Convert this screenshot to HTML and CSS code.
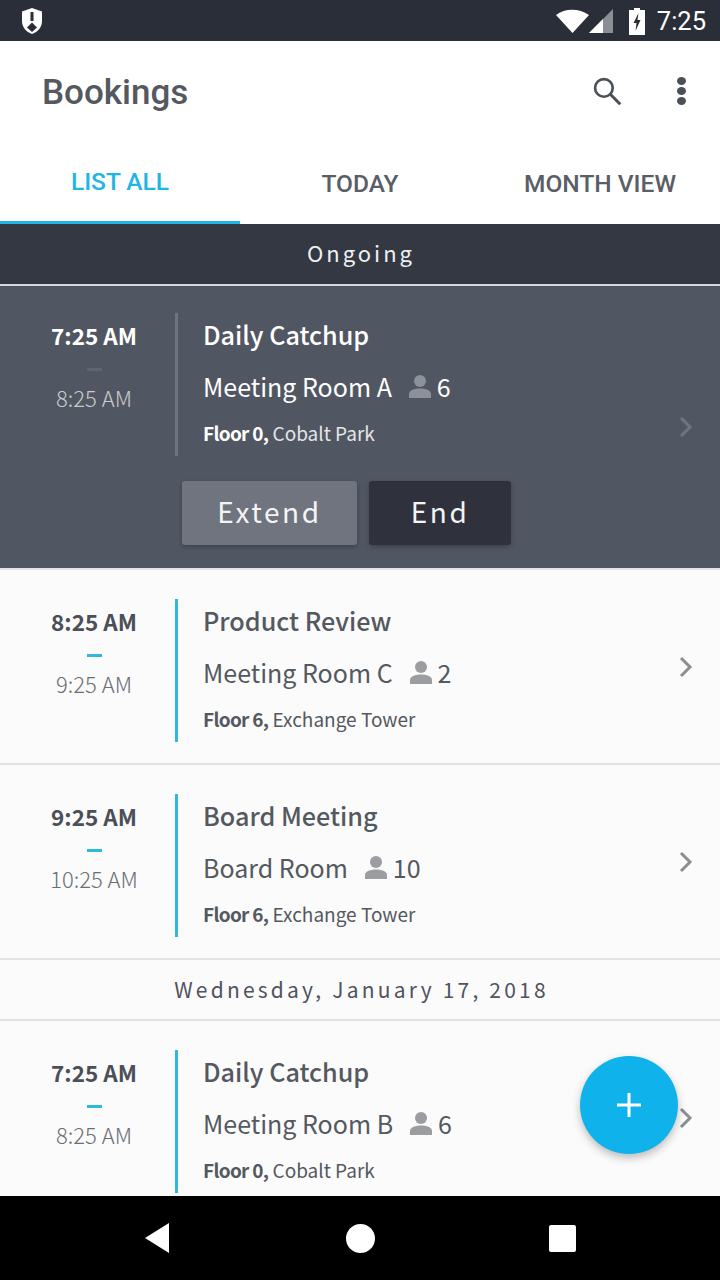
FILE: index.html
```html
<!DOCTYPE html>
<html lang="en">
<head>
    <meta charset="UTF-8">
    <meta name="viewport" content="width=device-width, initial-scale=1.0">
    <title>Bookings</title>
    <link rel="stylesheet" href="styles.css">
</head>
<body>
    <div class="screen">
        <div class="status-bar">
            <svg class="shield" width="24" height="28" viewBox="0 0 24 28">
                <path fill="#fff" d="M12 1 L22 4.500 V14 C22 20 18 25 12 27 C6 25 2 20 2 14 V4.500 Z"/>
                <rect x="10.500" y="5" width="3" height="9" fill="#2a2e39"/>
                <path fill="#2a2e39" d="M12 15.500 L17 20.500 L12 25 L7 20.500 Z"/>
            </svg>
            <div class="status-right">
                <svg width="36" height="24" viewBox="0 0 36 24"><path fill="#fff" d="M1 6 C10 -1 24 -1 34 6 L17.500 24 Z"/></svg>
                <svg class="signal" width="26" height="26" viewBox="0 0 26 26">
                    <path fill="#8b8e95" d="M25 1 V25 H1 Z"/>
                    <path fill="#fff" d="M15 11 V25 H1 Z"/>
                </svg>
                <svg class="battery" width="16" height="28" viewBox="0 0 16 28">
                    <path fill="#fff" d="M5 1 H11 V3 H16 V28 H0 V3 H5 Z"/>
                    <path fill="#2a2e39" d="M9.500 6 L4.500 16 H7.500 L6.500 24 L11.500 13 H8.500 Z"/>
                </svg>
                <span class="clock">7:25</span>
            </div>
        </div>

        <div class="app-bar">
            <h1>Bookings</h1>
            <svg class="search" width="30" height="30" viewBox="0 0 34 34">
                <circle cx="13.500" cy="13.500" r="10" fill="none" stroke="#4b4f57" stroke-width="3"/>
                <path d="M21 21 L32 32" stroke="#4b4f57" stroke-width="3.500"/>
            </svg>
            <div class="dots"><i></i><i></i><i></i></div>
        </div>

        <div class="tabs">
            <div class="tab active">LIST ALL</div>
            <div class="tab">TODAY</div>
            <div class="tab">MONTH VIEW</div>
        </div>

        <div class="ongoing-title">Ongoing</div>

        <div class="list">
            <div class="booking ongoing">
                <div class="booking-row">
                    <div class="times">
                        <div class="start">7:25 AM</div>
                        <div class="dash"></div>
                        <div class="end">8:25 AM</div>
                    </div>
                    <div class="details">
                        <div class="name">Daily Catchup</div>
                        <div class="room">Meeting Room A
                            <svg class="person" width="26" height="24" viewBox="0 0 26 24"><circle cx="13" cy="7" r="6"/><path d="M2 24 V20 C2 16 8 14.500 13 14.500 C18 14.500 24 16 24 20 V24 Z"/></svg>
                            <span>6</span>
                        </div>
                        <div class="place"><b>Floor 0,</b> Cobalt Park</div>
                    </div>
                    <svg class="chevron" width="16" height="24" viewBox="0 0 16 24"><path d="M3 3 L12 12 L3 21" fill="none" stroke-width="3"/></svg>
                </div>
                <div class="actions">
                    <button class="btn extend">Extend</button>
                    <button class="btn end-btn">End</button>
                </div>
            </div>

            <div class="booking">
                <div class="booking-row">
                    <div class="times">
                        <div class="start">8:25 AM</div>
                        <div class="dash"></div>
                        <div class="end">9:25 AM</div>
                    </div>
                    <div class="details">
                        <div class="name">Product Review</div>
                        <div class="room">Meeting Room C
                            <svg class="person" width="26" height="24" viewBox="0 0 26 24"><circle cx="13" cy="7" r="6"/><path d="M2 24 V20 C2 16 8 14.500 13 14.500 C18 14.500 24 16 24 20 V24 Z"/></svg>
                            <span>2</span>
                        </div>
                        <div class="place"><b>Floor 6,</b> Exchange Tower</div>
                    </div>
                    <svg class="chevron" width="16" height="24" viewBox="0 0 16 24"><path d="M3 3 L12 12 L3 21" fill="none" stroke-width="3"/></svg>
                </div>
            </div>

            <div class="booking">
                <div class="booking-row">
                    <div class="times">
                        <div class="start">9:25 AM</div>
                        <div class="dash"></div>
                        <div class="end">10:25 AM</div>
                    </div>
                    <div class="details">
                        <div class="name">Board Meeting</div>
                        <div class="room">Board Room
                            <svg class="person" width="26" height="24" viewBox="0 0 26 24"><circle cx="13" cy="7" r="6"/><path d="M2 24 V20 C2 16 8 14.500 13 14.500 C18 14.500 24 16 24 20 V24 Z"/></svg>
                            <span>10</span>
                        </div>
                        <div class="place"><b>Floor 6,</b> Exchange Tower</div>
                    </div>
                    <svg class="chevron" width="16" height="24" viewBox="0 0 16 24"><path d="M3 3 L12 12 L3 21" fill="none" stroke-width="3"/></svg>
                </div>
            </div>

            <div class="date-title">Wednesday, January 17, 2018</div>

            <div class="booking">
                <div class="booking-row">
                    <div class="times">
                        <div class="start">7:25 AM</div>
                        <div class="dash"></div>
                        <div class="end">8:25 AM</div>
                    </div>
                    <div class="details">
                        <div class="name">Daily Catchup</div>
                        <div class="room">Meeting Room B
                            <svg class="person" width="26" height="24" viewBox="0 0 26 24"><circle cx="13" cy="7" r="6"/><path d="M2 24 V20 C2 16 8 14.500 13 14.500 C18 14.500 24 16 24 20 V24 Z"/></svg>
                            <span>6</span>
                        </div>
                        <div class="place"><b>Floor 0,</b> Cobalt Park</div>
                    </div>
                    <svg class="chevron" width="16" height="24" viewBox="0 0 16 24"><path d="M3 3 L12 12 L3 21" fill="none" stroke-width="3"/></svg>
                </div>
            </div>
        </div>

        <div class="fab">
            <svg width="26" height="26" viewBox="0 0 26 26"><path d="M13 1 V25 M1 13 H25" stroke="#fff" stroke-width="3"/></svg>
        </div>

        <div class="nav-bar">
            <svg width="26" height="30" viewBox="0 0 26 30"><path fill="#fff" d="M25 0 V30 L1 15 Z"/></svg>
            <div class="home"></div>
            <div class="recent"></div>
        </div>
    </div>
</body>
</html>
```

FILE: styles.css
```css
* {
    box-sizing: border-box;
}
body {
    margin: 0;
    font-family: "Noto Sans CJK SC", "Noto Sans", sans-serif;
    background-color: #fff;
}
.screen {
    position: relative;
    width: 720px;
    height: 1280px;
    display: flex;
    flex-direction: column;
    overflow: hidden;
}

.status-bar {
    height: 41px;
    flex: none;
    background-color: #2a2e39;
    display: flex;
    align-items: center;
    justify-content: space-between;
    padding: 0 14px 0 20px;
}
.status-right {
    display: flex;
    align-items: center;
}
.signal {
    margin-left: -3px;
}
.battery {
    margin-left: 15px;
}
.clock {
    margin-left: 12px;
    font-family: Roboto, sans-serif;
    font-size: 25.5px;
    color: #fff;
}

.app-bar {
    height: 99px;
    flex: none;
    display: flex;
    align-items: center;
    padding-left: 42px;
}
.app-bar h1 {
    margin: 4px 0 0;
    flex: 1;
    font-family: Roboto, sans-serif;
    font-size: 35px;
    font-weight: 500;
    color: #54585f;
}
.search {
    margin-right: 55px;
}
.dots {
    display: flex;
    flex-direction: column;
    gap: 2px;
    margin-right: 34px;
}
.dots i {
    width: 9px;
    height: 8px;
    border-radius: 50%;
    background-color: #4b4f57;
}

.tabs {
    height: 84px;
    flex: none;
    display: flex;
}
.tab {
    flex: 1;
    display: flex;
    align-items: center;
    justify-content: center;
    padding-top: 2px;
    font-family: Roboto, sans-serif;
    font-size: 24.5px;
    font-weight: 500;
    color: #5a5e66;
}
.tab.active {
    color: #1fb5e5;
    border-bottom: 3px solid #1fb5e5;
}

.ongoing-title {
    height: 62px;
    flex: none;
    display: flex;
    align-items: center;
    justify-content: center;
    padding: 0 0 4px 2px;
    background-color: #343843;
    border-bottom: 2px solid #d5d7da;
    color: #eef0f2;
    font-size: 22px;
    letter-spacing: 3px;
}

.list {
    flex: 1;
    overflow: hidden;
    background-color: #fbfbfb;
}
.booking {
    height: 195px;
    padding-top: 29px;
    border-bottom: 2px solid #e2e3e5;
}
.booking:nth-last-child(1) {
    border-bottom: none;
}
.booking-row {
    display: flex;
    align-items: center;
}
.times {
    width: 178px;
    height: 143px;
    flex: none;
    padding-left: 13px;
    border-right: 3px solid #2fb8de;
    text-align: center;
    color: #4b4f57;
}
.start {
    margin-top: 6px;
    font-size: 22.500px;
    line-height: 32px;
    font-weight: 700;
}
.dash {
    width: 15px;
    height: 3px;
    margin: 17px auto 0;
    background-color: #2fb8de;
}
.end {
    margin-top: 9px;
    font-size: 22px;
    line-height: 34px;
    font-weight: 300;
    color: #6b6e75;
}
.details {
    flex: 1;
    padding-left: 25px;
    height: 143px;
    color: #54585f;
}
.name {
    font-size: 25.200px;
    line-height: 36px;
    font-weight: 500;
    margin-top: 3px;
}
.room {
    display: flex;
    align-items: center;
    margin-top: 16px;
    font-size: 25px;
    line-height: 36px;
    font-weight: 400;
}
.person {
    margin: 0 4px 0 15px;
    fill: #9b9da1;
}
.place {
    margin-top: 14px;
    font-size: 19px;
    line-height: 30px;
}
.place b {
    font-weight: 700;
    letter-spacing: -0.7px;
}
.chevron {
    flex: none;
    margin: 0 26px 8px 0;
    stroke: #8c8e92;
}

.ongoing {
    height: 284px;
    padding-top: 27px;
    background-color: #515762;
}
.ongoing .times {
    border-right-color: #6f7580;
    color: #fff;
}
.ongoing .dash {
    background-color: #5f6570;
}
.ongoing .end {
    color: #c8cacd;
}
.ongoing .details {
    color: #fff;
}
.ongoing .place {
    color: #e4e5e7;
}
.ongoing .place b {
    color: #fff;
}
.ongoing .person {
    fill: #8d9199;
}
.ongoing .chevron {
    stroke: #6f7580;
    margin-top: 90px;
    margin-bottom: 6px;
}
.actions {
    display: flex;
    gap: 12px;
    margin: 25px 0 0 182px;
}
.btn {
    height: 64px;
    border: none;
    border-radius: 3px;
    padding: 0 0 5px;
    font-family: inherit;
    font-size: 28px;
    letter-spacing: 2.600px;
    color: #f4f4f5;
    box-shadow: 0 2px 5px rgba(0, 0, 0, 0.25);
}
.extend {
    width: 175px;
    background-color: #6f747e;
}
.end-btn {
    width: 142px;
    background-color: #2f323c;
}

.date-title {
    height: 61px;
    display: flex;
    align-items: center;
    justify-content: center;
    padding: 0 0 2px 3px;
    border-bottom: 2px solid #e2e3e5;
    background-color: #fbfbfb;
    color: #4f535b;
    font-size: 21px;
    letter-spacing: 3.200px;
}

.fab {
    position: absolute;
    left: 580px;
    top: 1056px;
    width: 98px;
    height: 98px;
    border-radius: 50%;
    background-color: #0fb2ea;
    box-shadow: 0 4px 8px rgba(0, 0, 0, 0.25);
    display: flex;
    align-items: center;
    justify-content: center;
}

.nav-bar {
    height: 84px;
    flex: none;
    background-color: #000;
    display: flex;
    align-items: center;
    padding-left: 144px;
}
.home {
    width: 29px;
    height: 29px;
    margin-left: 176px;
    border-radius: 50%;
    background-color: #fff;
}
.recent {
    width: 27px;
    height: 27px;
    margin-left: 174px;
    border-radius: 2px;
    background-color: #fff;
}
```
